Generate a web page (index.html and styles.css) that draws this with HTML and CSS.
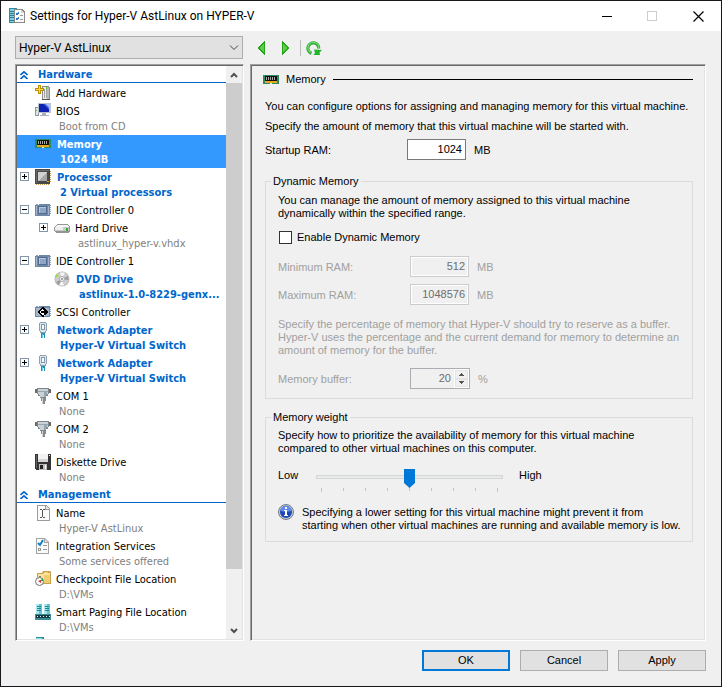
FILE: index.html
```html
<!DOCTYPE html>
<html lang="en">
<head>
<meta charset="utf-8">
<title>Settings for Hyper-V AstLinux on HYPER-V</title>
<link rel="stylesheet" href="styles.css">
</head>
<body>
<svg class="sprite" aria-hidden="true">
  <symbol id="i-app" viewBox="0 0 16 16">
    <path fill="#2a8fa0" d="M0 0h8v15H0z"/><path fill="#7fd0dc" d="M1 1h6v13H1z"/>
    <path fill="#2a7f90" d="M1 3h5v1H1zM1 5h5v1H1zM1 7h5v1H1zM1 9h5v1H1zM1 12h5v1H1z"/>
    <path fill="#8a8a8a" d="M5 1h8l3 3v11H5z"/><path fill="#fbfbfb" d="M6 2h6v3h3v9H6z"/><path fill="#d5d5d5" d="M12 2l3 3h-3z"/>
    <path fill="none" stroke="#2478c8" d="M7 5.500l1 1.500 2-3M7 10.500l1 1.500 2-3"/><path fill="#999" d="M11 7h3v1h-3zM11 11h3v1h-3z"/>
  </symbol>
  <symbol id="i-add" viewBox="0 0 16 16">
    <path fill="#8c8c8c" d="M7 1h6l2 1v13H7z"/><path fill="#ececec" d="M8 2h4v12H8z"/><path fill="#b9b9b9" d="M12 2h2v12h-2z"/>
    <path fill="#a2a2a2" d="M9 4h1v9H9zM11 3h1v10h-1z"/><path fill="#59d32b" d="M11 2h1v2h-1z"/><path fill="#555" d="M7 14h8v1H7z"/>
    <path fill="#b98e00" d="M3 0h3v3h3v3H6v3H3V6H0V3h3z"/><path fill="#ffdc3b" d="M4 1h1v3h3v1H5v3H4V5H1V4h3z"/>
  </symbol>
  <symbol id="i-bios" viewBox="0 0 16 16">
    <path fill="#8b96a3" d="M0 4h4v9H0z"/><path fill="#dfe5eb" d="M1 5h2v7H1z"/><path fill="#62bf3d" d="M1 7h1v1H1z"/>
    <path fill="#b9c1cf" d="M3 0h13v10H3z"/><path fill="#1023b0" d="M4 1h10v8H4z"/><path fill="#3f63e8" d="M9 1h5v6z"/><path fill="#a4bcff" d="M11 1h3v4z"/>
    <path fill="#a9b0b8" d="M7 10h4v2H7zM5 12h9v1H5z"/>
  </symbol>
  <symbol id="i-memory" viewBox="0 0 16 9">
    <path fill="#2b8c62" d="M0 0h16v9H0z"/><path fill="#101010" d="M2 1h12v5H2z"/>
    <path fill="#a9a9a9" d="M3 2h1v3H3zM5 2h1v3H5zM7 2h1v3H7zM9 2h1v3H9zM11 2h1v3h-1z"/>
    <path fill="#e6a820" d="M2 6h12v2H2z"/><path fill="#f6eed2" d="M7 8h2v1H7z"/>
  </symbol>
  <symbol id="i-cpu" viewBox="0 0 16 16">
    <path fill="#c69d50" d="M1 15h1v1H1zM3 15h1v1H3zM5 15h1v1H5zM7 15h1v1H7zM9 15h1v1H9zM11 15h1v1h-1zM13 15h1v1h-1zM15 2h1v1h-1zM15 4h1v1h-1zM15 6h1v1h-1zM15 8h1v1h-1zM15 10h1v1h-1zM15 12h1v1h-1z"/>
    <path fill="#484848" d="M0 0h15v15H0z"/><path fill="#6a6a6a" d="M1 1h13v1H1zM1 2h1v12H1z"/><path fill="#a8a8a8" d="M3 3h9v9H3z"/><path fill="#d2d2d2" d="M3 3h9L3 12z"/><path fill="#e6a32c" d="M12 12h2v1h-2z"/>
  </symbol>
  <symbol id="i-ide" viewBox="0 0 16 12">
    <path fill="#8ba0bd" d="M15 1h1v1h-1zM15 3h1v1h-1zM15 5h1v1h-1zM15 7h1v1h-1zM15 9h1v1h-1zM1 0h2v1H1z"/><path fill="#6f87a6" d="M0 1h4V0h11v12H0z"/><path fill="#a5b5ca" d="M1 2h1v9H1zM13 2h1v9h-1z"/>
    <path fill="#526b91" d="M3 2h9v8H3z"/><path fill="#b5c5da" d="M4 3h7v6H4z"/><path fill="#8fa6c6" d="M5 4h6v5H5z"/>
  </symbol>
  <symbol id="i-scsi" viewBox="0 0 16 12">
    <path fill="#8ba0bd" d="M15 1h1v1h-1zM15 3h1v1h-1zM15 5h1v1h-1zM15 7h1v1h-1zM15 9h1v1h-1zM1 0h2v1H1z"/><path fill="#6f87a6" d="M0 1h4V0h11v11H0z"/><path fill="#a5b5ca" d="M1 2h13v8H1z"/>
    <path fill="#fff" d="M2 6l5-5h2l4 5-4 5H7z"/><path fill="none" stroke="#000" stroke-width="1.500" d="M9 2H7.500L3.500 6l4 4H9M6 6h6M9 3l3 3-3 3"/>
  </symbol>
  <symbol id="i-hdd" viewBox="0 0 16 9">
    <path fill="#959595" d="M3 0h10l3 3v4l-1 1-1 1H2L0 7V3z"/><path fill="#f7f7f7" d="M3 1h10l2 2H1z"/><path fill="#c8c8c8" d="M1 3h14v4H1z"/><path fill="#eee" d="M1 3h8v3H1z"/><path fill="#27b421" d="M12 4h2v3h-2z"/>
  </symbol>
  <symbol id="i-dvd" viewBox="0 0 16 16">
    <circle cx="8" cy="8" r="7.500" fill="#b0b0b0"/><circle cx="8" cy="8" r="6.800" fill="#cdcdcd"/>
    <path fill="#f5f5f5" d="M8 8L6 1.500h5zM8 8l2 6.500H5z"/><path fill="#9b9b9b" d="M8 8l6-3 .5 4zM8 8l-6 3 3 3z"/><path fill="#8be032" d="M5 6L1 5.500 2.500 3z"/>
    <circle cx="8" cy="8" r="2.500" fill="#f6f6f6" stroke="#aaa"/><circle cx="8" cy="8" r="1" fill="#888"/>
  </symbol>
  <symbol id="i-net" viewBox="0 0 16 16">
    <path fill="#8fa1ae" d="M4 1h1V0h6v1h1v8h-1v2H5V9H4z"/><path fill="#dbe8f0" d="M5 1h6v8h-1v1H6V9H5z"/><path fill="#8399a9" d="M6 2h4v6H6z"/><path fill="#f4fafd" d="M7 3h2v4H7z"/>
    <path fill="#218fad" d="M6 11h4v2H6zM6 13h1v3H6zM9 13h1v3H9z"/><path fill="#5fcde3" d="M7 12h1v4H7z"/>
  </symbol>
  <symbol id="i-com" viewBox="0 0 16 16">
    <path fill="#6a6a6a" d="M0 1h16v1H0zM0 2h2v3H0zM14 2h2v3h-2z"/><path fill="#7d868a" d="M2 0h12v6h-1v2h-2v2H5V8H3V6H2z"/><path fill="#c9d2d6" d="M3 1h10v5h-1v1h-1v2H5V7H4V6H3z"/><path fill="#98a6ad" d="M3 3h10v1H3zM9 4h3v3h-1v2H9z"/>
    <path fill="#848c90" d="M6 10h5v3H6zM7 13h3v3H7z"/><path fill="#d6d6d6" d="M7 10h1v6H7z"/>
  </symbol>
  <symbol id="i-floppy" viewBox="0 0 16 16">
    <path fill="#333" d="M0 0h16v16H1l-1-1z"/><path fill="#606060" d="M1 1h1v13H1z"/><path fill="#f2f2f2" d="M3 0h10v8H3z"/><path fill="#d6d6d6" d="M3 5h10v3H3z"/><path fill="#bdbdbd" d="M4 10h8v6H4z"/><path fill="#222" d="M5 11h3v4H5z"/><path fill="#fff" d="M14 1h1v1h-1zM10 11h1v4h-1z"/>
  </symbol>
  <symbol id="i-name" viewBox="0 0 16 16">
    <path fill="#9b9b9b" d="M2 0h9l4 4v12H2z"/><path fill="#fafafa" d="M3 1h7v4h4v10H3z"/><path fill="#e4e4e4" d="M11 1l3 3h-3z"/><path fill="#555" d="M5 4h2v1H5zM8 4h2v1H8zM7 5h1v7H7zM5 12h2v1H5zM8 12h2v1H8z"/>
  </symbol>
  <symbol id="i-integration" viewBox="0 0 16 16">
    <path fill="#a2a2a2" d="M1 0h9l4 4v12H1z"/><path fill="#fafafa" d="M2 1h7v4h4v10H2z"/><path fill="#ddd" d="M10 1l3 3h-3z"/><path fill="none" stroke="#1482bf" stroke-width="2" d="M3 5l2 2 3-5"/><path fill="#999" d="M8 7h4v1H8zM8 11h4v1H8zM3 10h3v3H3z"/><path fill="#fff" d="M4 11h1v1H4z"/>
  </symbol>
  <symbol id="i-checkpoint" viewBox="0 0 16 16">
    <path fill="#c9a04a" d="M2 3V2h5l1-2h7l1 1v12H2z"/><path fill="#fbe3a0" d="M3 3h5l1-1h6v10H3z"/><path fill="#efcc72" d="M9 4h6v8H9zM9 1h4v1H9z"/>
    <circle cx="4.500" cy="10.500" r="4" fill="#f7f7f7" stroke="#767676"/><path fill="#777" d="M4 5h2v1H4z"/><path fill="#18a53a" d="M5 10l3-3v3z"/><path fill="#df2929" d="M3 10l3-1v3z"/>
  </symbol>
  <symbol id="i-paging" viewBox="0 0 16 16">
    <path fill="#66c6d0" d="M1 0h6v10H1zM9 0h6v10H9z"/><path fill="#a6e6ea" d="M1 0h3v10H1zM9 0h3v10H9z"/><path fill="#238594" d="M2 2h4v1H2zM2 4h4v1H2zM2 6h4v1H2zM10 2h4v1h-4zM10 4h4v1h-4zM10 6h4v1h-4z"/>
    <path fill="#3b8c96" d="M0 10h16v6H0z"/><path fill="#14383d" d="M1 11h14v3H1z"/><path fill="#e1f5f5" d="M2 12h1v1H2zM5 12h1v1H5zM8 12h1v1H8zM11 12h1v1h-1zM14 12h1v1h-1z"/>
  </symbol>
  <symbol id="i-autostart" viewBox="0 0 16 16">
    <path fill="#2c8b99" d="M1 0h8v14H1z"/><path fill="#8fdfe4" d="M1 1h6v12H1z"/><path fill="#2c8b99" d="M2 2h4v1H2z"/>
  </symbol>
  <symbol id="i-plus" viewBox="0 0 9 9"><path fill="#8397a8" d="M0 0h9v9H0z"/><path fill="#fff" d="M1 1h7v7H1z"/><path fill="#000" d="M2 4h5v1H2zM4 2h1v5H4z"/></symbol>
  <symbol id="i-minus" viewBox="0 0 9 9"><path fill="#8397a8" d="M0 0h9v9H0z"/><path fill="#fff" d="M1 1h7v7H1z"/><path fill="#000" d="M2 4h5v1H2z"/></symbol>
  <symbol id="i-collapse" viewBox="0 0 8 8"><path fill="none" stroke="#0066cc" stroke-width="1.600" d="M.5 4L4 .8 7.500 4M.5 8L4 4.800 7.500 8"/></symbol>
</svg>

<div class="window">
  <header class="titlebar">
    <svg class="ic16"><use href="#i-app"/></svg>
    <h1>Settings for Hyper-V AstLinux on HYPER-V</h1>
    <button class="caption" aria-label="Minimize"><svg class="glyph" viewBox="0 0 11 11"><path fill="#000" d="M1 5h10v1H1z"/></svg></button>
    <button class="caption" aria-label="Maximize" disabled><svg class="glyph" viewBox="0 0 11 11"><path fill="none" stroke="#ccc" d="M.5 .5h9v9h-9z"/></svg></button>
    <button class="caption" aria-label="Close"><svg class="glyph smooth" viewBox="0 0 11 11"><path fill="none" stroke="#000" stroke-width="1.200" d="M.5 .5l10 10M10.500 .5l-10 10"/></svg></button>
  </header>

  <div class="toolbar">
    <div class="combo">
      <select aria-label="Virtual machine"><option>Hyper-V AstLinux</option></select>
      <svg class="chevron" viewBox="0 0 10 6"><path fill="none" stroke="#444" d="M1 .5l4 4 4-4"/></svg>
    </div>
    <div class="tools">
      <button aria-label="Previous"><svg viewBox="0 0 8 14"><path fill="#26a51c" d="M8 0v14L0 7z"/><path fill="#5bd13f" d="M7 3v8L2 7z"/></svg></button>
      <button aria-label="Next"><svg viewBox="0 0 8 14"><path fill="#26a51c" d="M0 0v14l8-7z"/><path fill="#5bd13f" d="M1 3v8l5-4z"/></svg></button>
      <span class="divider"></span>
      <button class="refresh" aria-label="Refresh"><svg viewBox="0 0 16 14"><path fill="none" stroke="#35ad3c" stroke-width="3.200" d="M5.500 12.300A5.400 5.400 0 1 1 12.700 7.500"/><path fill="none" stroke="#7bdc78" stroke-width="1.200" d="M4.800 11.500A5.400 5.400 0 1 1 12.700 7.500"/><path fill="#20b52a" d="M8 8.500l8 .5-2.500 2.500L14 14H7.500l1.500-2z"/></svg></button>
    </div>
  </div>

  <main class="content">
    <nav class="tree" aria-label="Settings">
      <div class="tree-view">
        <h2><svg class="fold"><use href="#i-collapse"/></svg>Hardware</h2>
        <ul>
          <li><svg class="icon"><use href="#i-add"/></svg><span>Add Hardware</span></li>
          <li><svg class="icon"><use href="#i-bios"/></svg><span>BIOS<small>Boot from CD</small></span></li>
          <li class="changed selected"><svg class="icon mem"><use href="#i-memory"/></svg><span>Memory<small>1024 MB</small></span></li>
          <li class="changed"><svg class="box"><use href="#i-plus"/></svg><svg class="icon"><use href="#i-cpu"/></svg><span>Processor<small>2 Virtual processors</small></span></li>
          <li><svg class="box"><use href="#i-minus"/></svg><svg class="icon chip"><use href="#i-ide"/></svg><span>IDE Controller 0</span></li>
          <li class="child"><svg class="box"><use href="#i-plus"/></svg><svg class="icon disk"><use href="#i-hdd"/></svg><span>Hard Drive<small>astlinux_hyper-v.vhdx</small></span></li>
          <li><svg class="box"><use href="#i-minus"/></svg><svg class="icon chip"><use href="#i-ide"/></svg><span>IDE Controller 1</span></li>
          <li class="child changed"><svg class="icon smooth"><use href="#i-dvd"/></svg><span>DVD Drive<small>astlinux-1.0-8229-genx...</small></span></li>
          <li><svg class="icon chip"><use href="#i-scsi"/></svg><span>SCSI Controller</span></li>
          <li class="changed"><svg class="box"><use href="#i-plus"/></svg><svg class="icon"><use href="#i-net"/></svg><span>Network Adapter<small>Hyper-V Virtual Switch</small></span></li>
          <li class="changed"><svg class="box"><use href="#i-plus"/></svg><svg class="icon"><use href="#i-net"/></svg><span>Network Adapter<small>Hyper-V Virtual Switch</small></span></li>
          <li><svg class="icon"><use href="#i-com"/></svg><span>COM 1<small>None</small></span></li>
          <li><svg class="icon"><use href="#i-com"/></svg><span>COM 2<small>None</small></span></li>
          <li><svg class="icon"><use href="#i-floppy"/></svg><span>Diskette Drive<small>None</small></span></li>
        </ul>
        <h2><svg class="fold"><use href="#i-collapse"/></svg>Management</h2>
        <ul>
          <li><svg class="icon"><use href="#i-name"/></svg><span>Name<small>Hyper-V AstLinux</small></span></li>
          <li><svg class="icon smooth"><use href="#i-integration"/></svg><span>Integration Services<small>Some services offered</small></span></li>
          <li><svg class="icon smooth"><use href="#i-checkpoint"/></svg><span>Checkpoint File Location<small>D:\VMs</small></span></li>
          <li><svg class="icon"><use href="#i-paging"/></svg><span>Smart Paging File Location<small>D:\VMs</small></span></li>
          <li><svg class="icon"><use href="#i-autostart"/></svg></li>
        </ul>
      </div>
      <div class="scrollbar" aria-hidden="true">
        <svg class="arrow" viewBox="0 0 8 6"><path fill="none" stroke="#505050" stroke-width="2" d="M1 5l3-3 3 3"/></svg>
        <div class="track"><div class="thumb"></div></div>
        <svg class="arrow" viewBox="0 0 8 6"><path fill="none" stroke="#505050" stroke-width="2" d="M1 1l3 3 3-3"/></svg>
      </div>
    </nav>

    <section class="panel">
      <h2 class="panel-title"><svg class="mem"><use href="#i-memory"/></svg><span>Memory</span></h2>
      <div class="form">
        <p class="intro">You can configure options for assigning and managing memory for this virtual machine.</p>
        <p class="lead">Specify the amount of memory that this virtual machine will be started with.</p>
        <div class="field startup">
          <label for="startup">Startup RAM:</label>
          <input id="startup" type="text" value="1024"><span>MB</span>
        </div>

        <fieldset class="dynamic">
          <legend>Dynamic Memory</legend>
          <p>You can manage the amount of memory assigned to this virtual machine<br>dynamically within the specified range.</p>
          <div class="check"><input id="dynamic" type="checkbox"><label for="dynamic">Enable Dynamic Memory</label></div>
          <div class="field off">
            <label for="min">Minimum RAM:</label>
            <input id="min" type="text" value="512" disabled><span>MB</span>
          </div>
          <div class="field off">
            <label for="max">Maximum RAM:</label>
            <input id="max" type="text" value="1048576" disabled><span>MB</span>
          </div>
          <p class="off note">Specify the percentage of memory that Hyper-V should try to reserve as a buffer.<br>Hyper-V uses the percentage and the current demand for memory to determine an<br>amount of memory for the buffer.</p>
          <div class="field off">
            <label for="buffer">Memory buffer:</label>
            <div class="spinner">
              <input id="buffer" type="text" value="20" disabled>
              <div class="steps">
                <button aria-label="Increase" disabled><svg viewBox="0 0 5 3"><path fill="#555" d="M2 0h1v1h1v1h1v1H0V2h1V1h1z"/></svg></button>
                <button aria-label="Decrease" disabled><svg viewBox="0 0 5 3"><path fill="#555" d="M0 0h5v1H4v1H3v1H2V2H1V1H0z"/></svg></button>
              </div>
            </div>
            <span>%</span>
          </div>
        </fieldset>

        <fieldset class="weight">
          <legend>Memory weight</legend>
          <p>Specify how to prioritize the availability of memory for this virtual machine<br>compared to other virtual machines on this computer.</p>
          <div class="slider">
            <label for="weight">Low</label>
            <div class="range">
              <input id="weight" type="range" min="0" max="8" value="4">
              <div class="ticks"><i></i><i></i><i></i><i></i><i></i><i></i><i></i><i></i><i></i></div>
            </div>
            <span>High</span>
          </div>
          <div class="info">
            <svg viewBox="0 0 16 16"><circle cx="8" cy="8" r="7.500" fill="#c9cdd6" stroke="#777c88"/><circle cx="8" cy="8" r="6" fill="#1d48b8"/><path fill="#5f8be6" d="M2.500 7a5.500 5.500 0 0 1 11 0C10 8 6 8 2.500 7z"/><path fill="#fff" d="M7 3h2v2H7zM6 6h3v6H7V7H6zM6 11h4v1H6z"/></svg>
            <p>Specifying a lower setting for this virtual machine might prevent it from<br>starting when other virtual machines are running and available memory is low.</p>
          </div>
        </fieldset>
      </div>
    </section>
  </main>

  <footer class="actions">
    <button class="default">OK</button>
    <button>Cancel</button>
    <button>Apply</button>
  </footer>
</div>
</body>
</html>
```

FILE: styles.css
```css
* { box-sizing: border-box; }

body {
  margin: 0;
  font: 11px/13px "Liberation Sans", sans-serif;
  color: #000;
}

h1, h2, p, ul, fieldset { margin: 0; padding: 0; font-weight: normal; }
ul { list-style: none; }
svg { display: block; flex: none; shape-rendering: crispEdges; }
button, input, select { font: inherit; color: inherit; margin: 0; padding: 0; border-radius: 0; }
.sprite { position: absolute; width: 0; height: 0; }
.smooth, .arrow, .chevron, .refresh svg, .info svg { shape-rendering: auto; }

.window {
  display: flex;
  flex-direction: column;
  height: 100vh;
  border: 1px solid #18181c;
  background: #f0f0f0;
}

.titlebar {
  display: flex;
  align-items: center;
  height: 30px;
  padding-left: 8px;
  background: #fff;
}
.titlebar h1 {
  flex: 1;
  margin-left: 5px;
  font: 12px/16px Roboto, sans-serif;
}
.ic16 { width: 16px; height: 16px; }
.caption {
  display: flex;
  align-items: center;
  justify-content: center;
  width: 46px;
  height: 30px;
  border: 0;
  background: none;
}
.glyph { width: 11px; height: 11px; }

.toolbar {
  display: flex;
  align-items: center;
  gap: 14px;
  padding: 5px 15px 5px 14px;
}
.combo { position: relative; width: 228px; }
.combo select {
  display: block;
  width: 100%;
  height: 23px;
  padding-left: 3px;
  border: 1px solid #adadad;
  background: #e1e1e1;
  font: 12px/16px Roboto, sans-serif;
  appearance: none;
}
.chevron {
  position: absolute;
  top: 9px;
  right: 4px;
  width: 10px;
  height: 6px;
  pointer-events: none;
}
.tools { display: flex; align-items: center; }
.tools button { border: 0; background: none; }
.tools button + button { margin-left: 17px; }
.tools svg { width: 8px; height: 14px; }
.tools .refresh svg { width: 16px; height: 14px; }
.divider { width: 1px; height: 16px; margin: 0 5px 0 10px; background: #bdbdbd; }

.content {
  display: grid;
  grid-template-columns: 229px 1fr;
  gap: 6px;
  flex: 1;
  min-height: 0;
  padding: 0 15px 0 14px;
}
.tree, .panel {
  border: 1px solid;
  border-color: #a0a0a0 #fff #fff #a0a0a0;
  padding: 1px;
  box-shadow: inset 1px 1px #696969, inset -1px -1px #e3e3e3;
}

.tree {
  display: flex;
  min-height: 0;
  background: #fff;
  font-family: "DejaVu Sans Condensed", sans-serif;
}
.tree-view { flex: 1; overflow: hidden; }
.tree h2 {
  display: flex;
  align-items: center;
  gap: 10px;
  height: 17px;
  margin-bottom: 1px;
  padding: 2px 0 0 3px;
  border-bottom: 1px solid #0066cc;
  color: #0066cc;
  font-size: 11px;
  font-weight: bold;
  line-height: 14px;
}
.fold { width: 8px; height: 8px; shape-rendering: auto; }
.tree li {
  display: grid;
  grid-template-columns: 9px 16px 1fr;
  column-gap: 6px;
  min-height: 18px;
  padding: 1px 0 1px 3px;
  line-height: 15px;
  white-space: nowrap;
}
.tree li.child { padding-left: 22px; }
.tree .box { width: 9px; height: 9px; margin-top: 3px; }
.tree .icon { grid-column: 2; width: 16px; height: 16px; margin-bottom: -2px; }
.tree .mem { height: 9px; margin-top: 3px; }
.tree .chip { height: 12px; margin-top: 2px; }
.tree .disk { height: 9px; margin-top: 4px; }
.tree span { grid-column: 3; grid-row: 1; margin-left: -1px; padding-top: 1px; }
.tree small { display: block; margin-left: 3px; font-size: 11px; color: #808080; }
.tree .changed { color: #0066cc; font-weight: bold; }
.tree .changed span { margin-left: 0; }
.tree .changed small { color: inherit; }
.tree .selected { background: #3399ff; color: #fff; }

.scrollbar {
  display: flex;
  flex-direction: column;
  align-items: center;
  width: 16px;
  padding: 6px 0 5px;
  background: #f0f0f0;
}
.arrow { width: 8px; height: 6px; }
.track { flex: 1; width: 100%; margin: 5px 0 5px; }
.thumb { height: 90%; background: #cdcdcd; }

.panel { padding: 7px 12px 12px; }
.panel-title { display: flex; align-items: center; font-size: 11px; line-height: 15px; }
.panel-title .mem { width: 16px; height: 9px; }
.panel-title span { margin: 0 7px; }
.panel-title::after { content: ""; flex: 1; height: 1px; background: #000; }
.form { padding: 13px 0 0 2px; }
.lead { margin-top: 7px; }

.field { display: flex; align-items: center; height: 21px; }
.field label { width: 132px; padding-top: 2px; }
.field input {
  width: 59px;
  height: 21px;
  padding: 0 3px 1px;
  border: 1px solid #7a7a7a;
  background: #fff;
  text-align: right;
}
.field span { margin-left: 8px; padding-top: 2px; }
.startup { margin-top: 6px; }
.startup label { width: 142px; }
.field input:disabled {
  border-color: #ccc;
  background: #f0f0f0;
  box-shadow: inset 0 0 0 1px #fff;
  color: #6d6d6d;
}
.off { color: #a0a0a0; }

fieldset { min-width: 0; border: 1px solid #dcdcdc; padding: 0 12px; }
legend { margin-left: -7px; padding: 0 2px; }
.dynamic { margin-top: 15px; padding-bottom: 9px; }
.dynamic > p:first-of-type { margin-top: 6px; }
.check { display: flex; align-items: center; gap: 5px; margin: 11px 0 12px; }
.check input {
  width: 13px;
  height: 13px;
  margin-left: 1px;
  border: 1px solid #333;
  background: #fff;
  appearance: none;
}
.field + .field { margin-top: 7px; }
.note { margin: 13px 0 11px; white-space: nowrap; }

.spinner {
  display: flex;
  width: 60px;
  height: 21px;
  border: 1px solid #abadb3;
}
.spinner input, .spinner input:disabled {
  flex: 1;
  min-width: 0;
  height: 19px;
  border: 0;
  box-shadow: none;
}
.steps { display: flex; flex-direction: column; width: 15px; padding: 1px; background: #fff; }
.steps button {
  display: flex;
  flex: 1;
  align-items: center;
  justify-content: center;
  border: 1px solid #e3e3e3;
  background: #f0f0f0;
}
.steps svg { width: 5px; height: 3px; }

.weight { margin-top: 12px; padding-bottom: 9px; }
.weight > p { margin-top: 5px; }
.slider { display: flex; margin-top: 12px; }
.slider label { width: 38px; padding-top: 2px; }
.slider > span { margin-left: 16px; padding-top: 2px; }
.range { width: 187px; }
.range input {
  display: block;
  width: 100%;
  height: 20px;
  background: none;
  appearance: none;
}
.range input::-webkit-slider-runnable-track {
  height: 4px;
  border: 1px solid #d6d6d6;
  background: #e7eaea;
}
.range input::-webkit-slider-thumb {
  width: 11px;
  height: 19px;
  margin-top: -7px;
  background: #0078d7;
  clip-path: polygon(0 0, 100% 0, 100% 74%, 50% 100%, 0 74%);
  appearance: none;
}
.ticks { display: flex; justify-content: space-between; padding: 1px 5px 0; }
.ticks i { width: 1px; height: 3px; background: #c4c4c4; }
.ticks i:first-child, .ticks i:last-child { height: 4px; }
.info { display: flex; gap: 8px; margin-top: 12px; white-space: nowrap; }
.info svg { width: 16px; height: 16px; }
.info p { padding-top: 2px; }

.actions {
  display: flex;
  justify-content: flex-end;
  gap: 10px;
  padding: 9px 15px 15px;
}
.actions button {
  width: 88px;
  height: 21px;
  border: 1px solid #adadad;
  background: #e1e1e1;
}
.actions .default { border: 2px solid #0078d7; }
```
